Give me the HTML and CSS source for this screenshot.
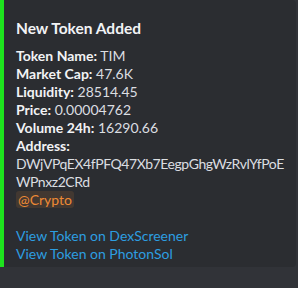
FILE: index.html
```html
<!DOCTYPE html>
<html>
<head>
<meta charset="utf-8">
<link rel="stylesheet" href="styles.css">
</head>
<body>
<div class="embed">
  <div class="title">New Token Added</div>
  <div class="desc">
    <div><b>Token Name:</b> TIM</div>
    <div><b>Market Cap:</b> 47.6K</div>
    <div><b>Liquidity:</b> 28514.45</div>
    <div><b>Price:</b> 0.00004762</div>
    <div><b>Volume 24h:</b> 16290.66</div>
    <div><b>Address:</b></div>
    <div class="addr">DWjVPqEX4fPFQ47Xb7EegpGhgWzRvlYfPoEWPnxz2CRd</div>
    <div><span class="mention">@Crypto</span></div>
    <div class="blank">&nbsp;</div>
    <div><a class="link" href="#">View Token on DexScreener</a></div>
    <div><a class="link" href="#">View Token on PhotonSol</a></div>
  </div>
</div>
</body>
</html>
```

FILE: styles.css
```css
html, body {
  margin: 0;
  padding: 0;
  background: #313338;
}
body {
  width: 298px;
  height: 288px;
  overflow: hidden;
  font-family: "Lato", "Noto Sans", sans-serif;
}
.embed {
  box-sizing: border-box;
  width: 296px;
  height: 267px;
  background: #2b2d31;
  border-left: 4px solid #1ee31e;
  border-radius: 0 4px 4px 0;
  padding: 17px 12px 0 12px;
}
.title {
  color: #f2f3f5;
  font-weight: 700;
  font-size: 15.5px;
  line-height: 22px;
}
.desc {
  margin-top: 8px;
  color: #dbdee1;
  font-size: 14px;
  line-height: 18px;
}
.desc b {
  color: #f2f3f5;
  font-weight: 700;
}
.addr {
  width: 268px;
  letter-spacing: -0.45px;
  word-break: break-all;
}
.mention {
  color: #ee8a35;
  background: rgba(238, 138, 53, 0.12);
  border-radius: 3px;
  padding: 0 2px;
}
.link {
  color: #2d9ee0;
  text-decoration: none;
}
```
